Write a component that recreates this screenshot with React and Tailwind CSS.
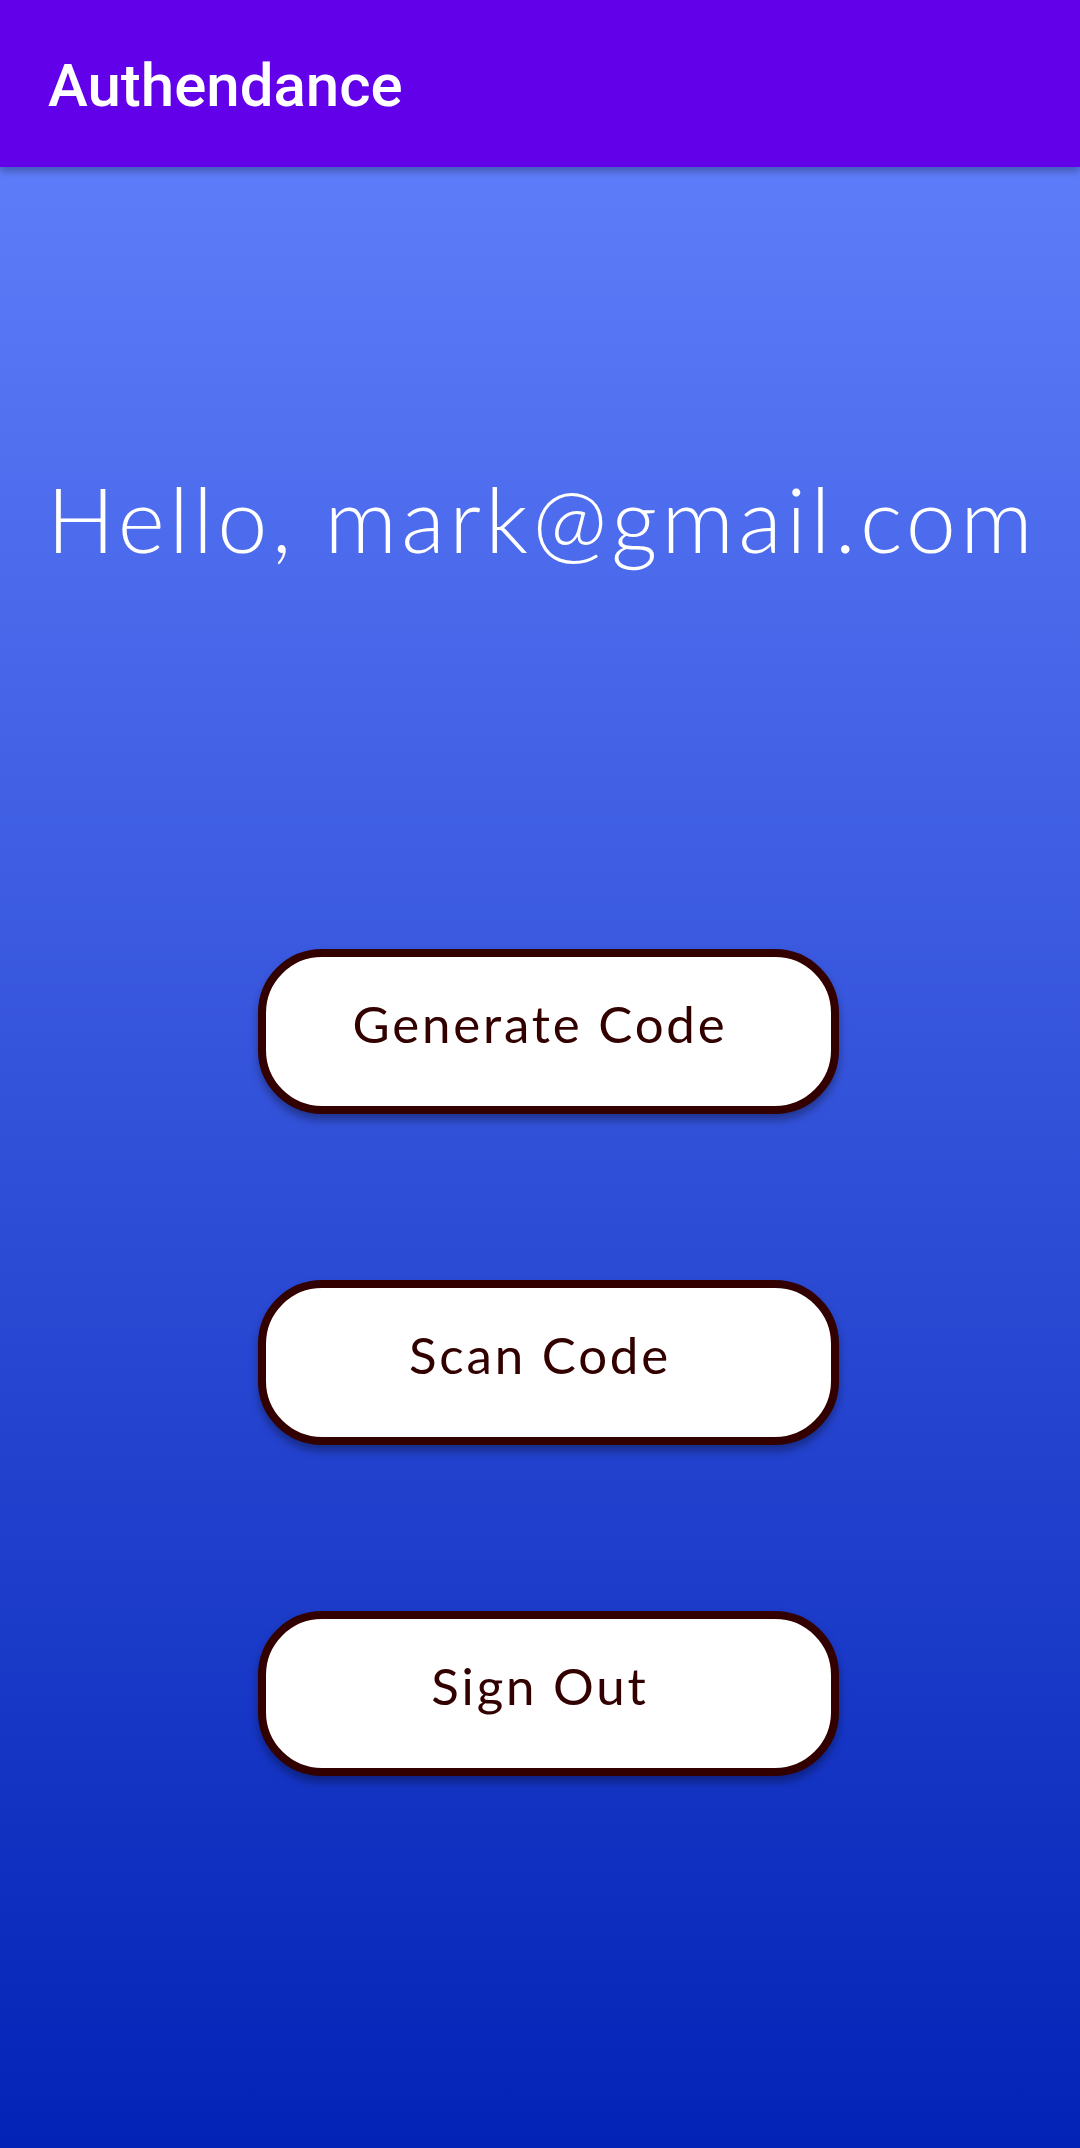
export default function App() {
  const buttons = ["Generate Code", "Scan Code", "Sign Out"];
  return (
    <div className="w-[1080px] h-[2148px] flex flex-col overflow-hidden bg-[linear-gradient(180deg,#6584ff_0%,#0323b7_100%)]">
      <div className="relative z-10 h-[167px] shrink-0 bg-[#6200ea] flex items-center pl-[48px] shadow-[0_4px_8px_rgba(0,0,0,0.3)]">
        <span className="text-white text-[60px] font-medium leading-none pt-[4px] font-['Roboto',sans-serif]">
          Authendance
        </span>
      </div>
      <div className="flex flex-col items-center">
        <div className="mt-[306px] ml-[4px] text-white text-[90px] tracking-[4.3px] leading-none font-light font-['Lato',sans-serif] whitespace-nowrap">
          Hello, mark@gmail.com
        </div>
        <div className="mt-[386px] flex flex-col gap-[166px] ml-[17px]">
          {buttons.map((b) => (
            <div
              key={b}
              className="w-[581px] h-[165px] rounded-[64px] border-[8px] border-[#330000] bg-white flex justify-center items-start pt-[41px] pr-[17px] shadow-[0_6px_8px_rgba(0,0,0,0.35)]"
            >
              <span className="text-[#330000] text-[51px] tracking-[2.8px] leading-none font-normal font-['Lato',sans-serif]">
                {b}
              </span>
            </div>
          ))}
        </div>
      </div>
    </div>
  );
}
